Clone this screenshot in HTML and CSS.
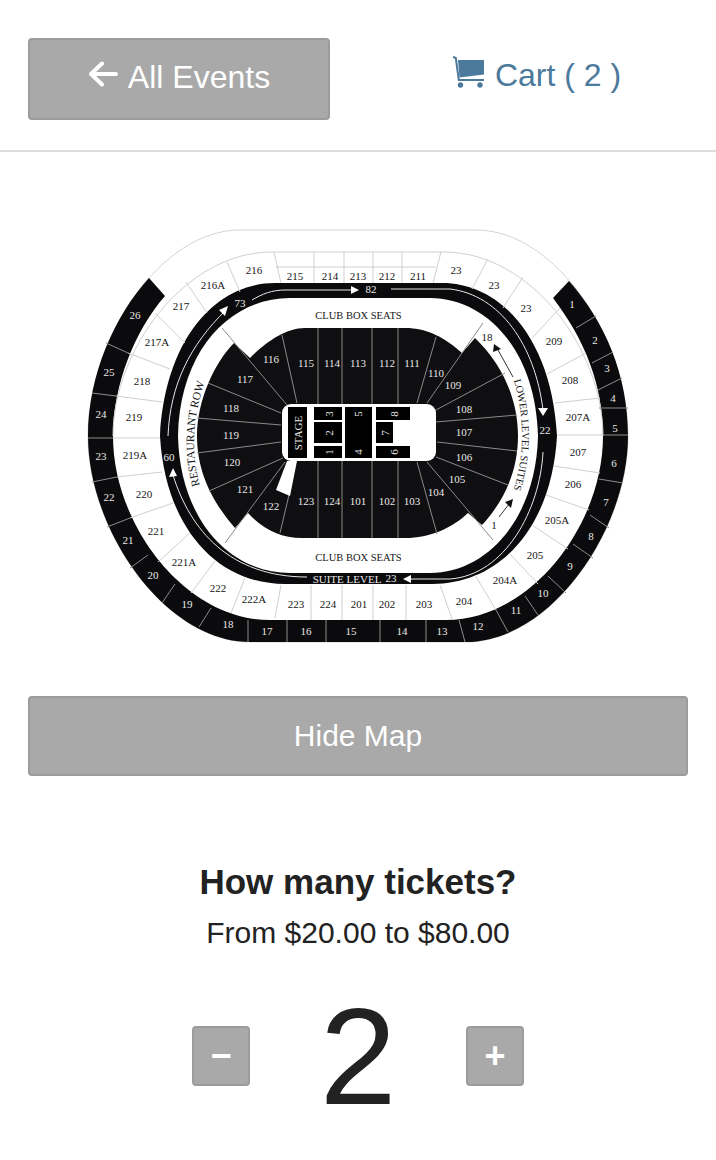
FILE: index.html
```
<!DOCTYPE html>
<html lang="en">
<head>
<meta charset="utf-8">
<title>Tickets</title>
<link rel="stylesheet" href="styles.css">
</head>
<body>
<header class="topbar">
  <div class="topbar-cell">
    <a class="btn btn-back" href="#">
      <svg class="icon-back" viewBox="0 0 30 26" width="30" height="26"><path d="M28 13H4M14 2.500L3 13l11 10.500"/></svg>
      <span>All Events</span>
    </a>
  </div>
  <div class="topbar-cell topbar-cart">
    <a class="cart" href="#">
      <svg class="icon-cart" viewBox="0 0 32 32" width="32" height="32">
        <path class="cart-fill" d="M5 4H31V18.500L6.500 21.500Z"/>
        <path class="cart-line" d="M0 0.800L2.800 2L5.800 24H31"/>
        <circle class="cart-fill" cx="7.500" cy="29" r="2.700"/>
        <circle class="cart-fill" cx="27" cy="29" r="2.700"/>
      </svg>
      <span>Cart ( 2 )</span>
    </a>
  </div>
</header>

<div class="map">
<svg class="map-svg" viewBox="0 152 716 544" width="716" height="544">
  <path class="shell" d="M88 436C88 340 160 230 240 230H476C556 230 628 340 628 436C628 530 551 642 466 642H250C165 642 88 530 88 436Z"/>
  <path class="black" fill-rule="evenodd" d="M149 278C115 315 88 375 88 436C88 530 165 642 250 642H466C551 642 628 530 628 436C628 375 605 322 569 281L553 298C585 340 603 385 603 436C603 525 531 620 446 620H270C185 620 113 525 113 436C113 385 135 330 165 296Z"/>
  <path class="hairline-light" d="M113 436C113 350 185 252 272 252H444C531 252 603 350 603 436"/>
  <path class="black" fill-rule="evenodd" d="M160 436C165 340 215 283 275 283H442C502 283 552 340 557 436C552 525 502 584 432 584H285C215 584 165 525 160 436ZM178 436C180 520 230 573 290 573H430C486 573 536 520 538 436C536 350 486 298 430 298H290C230 298 180 350 178 436Z"/>
  <path class="bowl" d="M234 343C215 362 197 400 197 436C197 475 215 505 235 528L248 513C262 528 280 538 302 538H405C430 538 452 528 468 513L482 525C505 500 518 470 518 436C518 400 503 365 475 338L462 353C445 338 428 328 405 328H305C285 328 265 343 250 358Z"/>

  <path class="hairline-light" d="M274 252L281 283M314 252V283M344 252V283M373 252V283M402 252V283M276 267H436M441 252L433 283M227 262L240 292M186 282L207 313M155 313L185 343M128 353L170 369M116 396L162 402M113 438H160M117 477L162 472M130 518L173 503M158 562L190 533M191 593L215 561M231 613L245 578M275 618L281 585M311 585V620M342 585V620M373 585V620M406 585V620M452 619L440 585M496 610L475 575M538 584L509 553M568 549L532 525M589 510L546 495M600 473L554 466M603 435H557M600 398L555 403M586 353L547 374M560 308L532 338M523 277L503 308M488 259L472 289"/>
  <path class="hairline-ring" d="M106 343L128 353M92 393L116 396M88 438H113M92 482L117 477M107 527L130 518M130 568L148 555M162 603L175 584M199 627L211 608M248 620V642M287 620V642M326 620V642M380 620V642M426 620V642M459 620L465 642M496 610L508 632M525 596L538 615M548 576L566 593M573 544L593 558M590 515L609 528M599 479L623 483M603 435H628M599 408H628M598 390L622 378M592 363L613 352M576 328L596 316"/>
  <path class="hairline-bowl" d="M318 328V404M342 328V404M372 328V404M398 328V404M318 461V538M342 461V538M372 461V538M398 461V538M282 335L297 403M222 328L287 405M208 383L281 413M197 418L281 425M197 453L281 442M209 491L283 458M225 543L285 462M280 533L289 495M417 403L436 337M427 403L483 323M436 410L505 373M436 422L517 415M437 442L517 451M436 457L508 485M427 462L493 540M417 462L437 534"/>

  <rect class="stage-bg" x="282" y="404" width="154" height="57" rx="9"/>
  <path class="white" d="M287 461H297L290 496L276 490Z"/>
  <path class="block" d="M288 407H307V458H288ZM314 407H342V420H314ZM314 422H342V443H314ZM314 446H342V458H314ZM345 407H372V458H345ZM376 407H410V420H376ZM376 422H393V443H376ZM376 446H410V458H376Z"/>

  <path class="flow" d="M252 300C262 294 272 290 285 290H353"/>
  <path class="flow" d="M391 289H450C500 295 535 345 543 410"/>
  <path class="flow" d="M168 436C170 385 190 345 226 310"/>
  <path class="flow" d="M173 475C190 530 230 577 307 577"/>
  <path class="flow" d="M410 579H450C505 575 540 510 543 452"/>
  <path class="white" d="M359 290L351 286V294ZM228 306L219 310L225 316ZM543 416L538 408H548ZM173 468L169 477L177 476ZM403 579L411 575V583Z"/>
  <path class="flow-dark" d="M513 377L498 350M499 517L509 504"/>
  <path class="dark" d="M494 344L493 352L501 349ZM513 499L505 502L511 508Z"/>

  <g class="seat seat-dark">
    <text x="254" y="270">216</text><text x="295" y="276">215</text><text x="330" y="276">214</text><text x="358" y="276">213</text><text x="387" y="276">212</text><text x="418" y="276">211</text><text x="456" y="270">23</text><text x="494" y="285">23</text><text x="526" y="308">23</text>
    <text x="213" y="285">216A</text><text x="181" y="306">217</text><text x="157" y="342">217A</text><text x="142" y="381">218</text><text x="134" y="417">219</text><text x="135" y="455">219A</text><text x="144" y="494">220</text><text x="156" y="531">221</text><text x="184" y="562">221A</text><text x="218" y="588">222</text><text x="254" y="599">222A</text>
    <text x="296" y="604">223</text><text x="328" y="604">224</text><text x="359" y="604">201</text><text x="387" y="604">202</text><text x="424" y="604">203</text><text x="464" y="601">204</text><text x="505" y="580">204A</text><text x="535" y="555">205</text><text x="557" y="520">205A</text><text x="573" y="484">206</text><text x="578" y="452">207</text><text x="578" y="417">207A</text><text x="570" y="380">208</text><text x="554" y="341">209</text>
    <text class="club" x="358.500" y="315">CLUB BOX SEATS</text><text class="club" x="358.500" y="557">CLUB BOX SEATS</text><text x="487" y="337">18</text><text x="494" y="525">1</text>
    <text class="curved-left"><textPath href="#restaurant-row" startOffset="50%">RESTAURANT ROW</textPath></text>
    <text class="curved-right"><textPath href="#lower-suites" startOffset="50%">LOWER LEVEL SUITES</textPath></text>
  </g>
  <defs>
    <path id="restaurant-row" d="M200 486Q186 435 205 382"/>
    <path id="lower-suites" d="M513 378Q531 435 513 492"/>
  </defs>
  <g class="seat seat-light">
    <text x="135" y="315">26</text><text x="109" y="372">25</text><text x="101" y="414">24</text><text x="101" y="456">23</text><text x="109" y="497">22</text><text x="128" y="540">21</text><text x="153" y="575">20</text><text x="187" y="604">19</text><text x="228" y="624">18</text><text x="267" y="631">17</text><text x="306" y="631">16</text><text x="351" y="631">15</text><text x="402" y="631">14</text><text x="442" y="631">13</text><text x="478" y="626">12</text><text x="516" y="610">11</text><text x="543" y="593">10</text><text x="570" y="566">9</text><text x="591" y="536">8</text><text x="606" y="502">7</text><text x="614" y="463">6</text><text x="615" y="428">5</text><text x="613" y="398">4</text><text x="607" y="368">3</text><text x="595" y="340">2</text><text x="572" y="304">1</text>
    <text x="240" y="303">73</text><text x="371" y="289">82</text><text x="545" y="430">22</text><text x="169" y="457">60</text><text x="347" y="579">SUITE LEVEL</text><text x="391" y="578">23</text>
    <text x="271" y="359">116</text><text x="306" y="363">115</text><text x="332" y="363">114</text><text x="358" y="363">113</text><text x="387" y="363">112</text><text x="412" y="363">111</text><text x="436" y="373">110</text><text x="453" y="385">109</text><text x="464" y="409">108</text><text x="464" y="432">107</text><text x="464" y="457">106</text><text x="457" y="479">105</text><text x="436" y="492">104</text><text x="412" y="501">103</text><text x="387" y="501">102</text><text x="358" y="501">101</text><text x="332" y="501">124</text><text x="306" y="501">123</text><text x="271" y="506">122</text><text x="245" y="489">121</text><text x="232" y="462">120</text><text x="231" y="435">119</text><text x="231" y="408">118</text><text x="245" y="379">117</text>
    <text x="298" y="433" transform="rotate(-90 298 433)">STAGE</text><text x="329" y="414" transform="rotate(-90 329 414)">3</text><text x="329" y="433" transform="rotate(-90 329 433)">2</text><text x="329" y="452" transform="rotate(-90 329 452)">1</text><text x="358" y="414" transform="rotate(-90 358 414)">5</text><text x="358" y="452" transform="rotate(-90 358 452)">4</text><text x="394" y="414" transform="rotate(-90 394 414)">8</text><text x="385" y="433" transform="rotate(-90 385 433)">7</text><text x="394" y="452" transform="rotate(-90 394 452)">6</text>
  </g>
</svg>
</div>

<div class="map-toggle">
  <a class="btn btn-wide" href="#">Hide Map</a>
</div>

<section class="tickets">
  <h2 class="tickets-title">How many tickets?</h2>
  <p class="tickets-range">From $20.00 to $80.00</p>
  <div class="stepper">
    <button class="btn btn-step" type="button">−</button>
    <div class="count">2</div>
    <button class="btn btn-step" type="button">+</button>
  </div>
</section>
</body>
</html>
```
FILE: styles.css
```
* { box-sizing: border-box; }
html, body { margin: 0; padding: 0; background: #fff; }
body { font-family: "Liberation Sans", Arial, sans-serif; color: #222; }

.topbar {
  display: grid;
  grid-template-columns: 1fr 1fr;
  height: 152px;
  padding-top: 38px;
  border-bottom: 2px solid #ddd;
}
.topbar-cell { padding: 0 28px; }
.topbar-cart { display: flex; justify-content: center; padding-top: 18px; }

.btn {
  display: flex;
  align-items: center;
  justify-content: center;
  background: #a9a9a9;
  border: 2px solid #9c9c9c;
  border-radius: 4px;
  color: #fff;
  text-decoration: none;
}
.btn-back { height: 82px; font-size: 32px; gap: 10px; padding-bottom: 4px; }
.icon-back { fill: none; stroke: #fff; stroke-width: 4; stroke-linecap: round; stroke-linejoin: round; margin-top: -6px; }

.cart { display: flex; align-items: flex-start; gap: 10px; height: 40px; font-size: 32px; line-height: 38px; color: #4c7a9c; text-decoration: none; }
.cart-fill { fill: #4c7a9c; }
.cart-line { fill: none; stroke: #4c7a9c; stroke-width: 2; }

.map-svg { display: block; }
.shell { fill: #fff; stroke: #d4d4d4; stroke-width: 1; }
.black { fill: #0b0b0d; }
.bowl { fill: #0f0f11; }
.white, .stage-bg { fill: #fff; }
.dark { fill: #111; }
.block { fill: #000; }
.hairline-light { fill: none; stroke: #cfcfcf; stroke-width: 1; }
.hairline-ring { fill: none; stroke: #8c8c8c; stroke-width: 1; }
.hairline-bowl { fill: none; stroke: #8a8a8a; stroke-width: 1; }
.flow { fill: none; stroke: #e8e8e8; stroke-width: 1; }
.flow-dark { fill: none; stroke: #333; stroke-width: 1; }

.seat text { font-family: "Liberation Serif", serif; font-size: 11px; text-anchor: middle; dominant-baseline: central; }
.seat .club { font-size: 10.500px; }
.seat .curved-left { font-size: 11.500px; dominant-baseline: auto; }
.seat .curved-right { font-size: 10.500px; dominant-baseline: auto; }
.seat-dark text { fill: #161616; }
.seat-light text { fill: #e8e8e8; }

.map-toggle { padding: 0 28px; }
.btn-wide { height: 80px; font-size: 30px; }

.tickets { display: flex; flex-direction: column; align-items: center; padding-top: 86px; }
.tickets-title { margin: 0; font-size: 35px; line-height: 40px; font-weight: 700; color: #222; }
.tickets-range { margin: 11px 0 0; font-size: 30px; line-height: 40px; color: #222; }
.stepper { display: flex; align-items: center; margin-top: 33px; height: 140px; }
.btn-step { width: 58px; height: 60px; padding: 0; font-family: inherit; font-size: 36px; font-weight: 700; line-height: 1; }
.count { width: 216px; text-align: center; font-size: 138px; line-height: 140px; color: #222; }
```
